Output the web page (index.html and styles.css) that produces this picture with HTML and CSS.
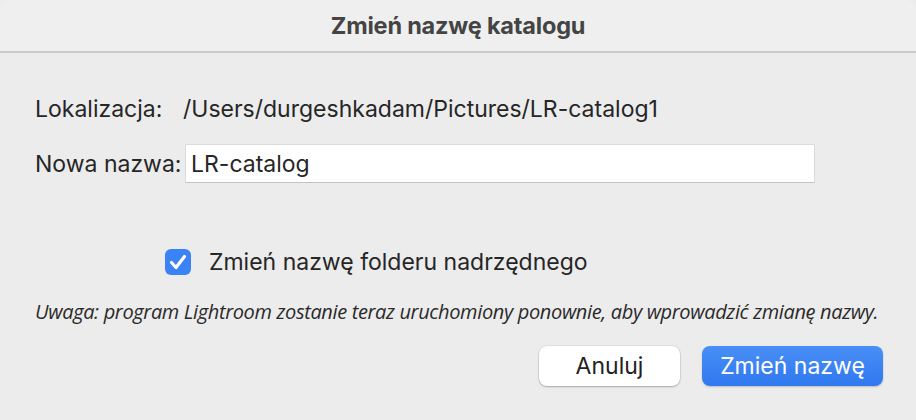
FILE: index.html
```html
<!DOCTYPE html>
<html lang="pl">
<head>
<meta charset="utf-8">
<link rel="stylesheet" href="styles.css">
</head>
<body>
<div class="dialog">
  <div class="titlebar">Zmień nazwę katalogu</div>
  <div class="content">
    <div class="row loc">
      <span class="label">Lokalizacja:</span>
      <span class="path">/Users/durgeshkadam/Pictures/LR-catalog1</span>
    </div>
    <div class="row name">
      <span class="label">Nowa nazwa:</span>
      <div class="input">LR-catalog</div>
    </div>
    <div class="row check">
      <span class="box"><svg viewBox="0 0 26 26" width="26" height="26"><path d="M6.5 13.5 L11 18.5 L19.5 7.5" fill="none" stroke="#fff" stroke-width="3.2" stroke-linecap="round" stroke-linejoin="round"/></svg></span>
      <span class="check-label">Zmień nazwę folderu nadrzędnego</span>
    </div>
    <div class="note">Uwaga: program Lightroom zostanie teraz uruchomiony ponownie, aby wprowadzić zmianę nazwy.</div>
    <div class="buttons">
      <button class="btn cancel">Anuluj</button>
      <button class="btn primary">Zmień nazwę</button>
    </div>
  </div>
</div>
</body>
</html>
```
FILE: styles.css
```css
html, body {
  margin: 0;
  padding: 0;
  background: #ececec;
}
body {
  width: 916px;
  height: 420px;
  overflow: hidden;
  font-family: Inter, "Noto Sans", sans-serif;
  color: #262626;
}
.dialog {
  width: 916px;
  height: 420px;
  display: flex;
  flex-direction: column;
}
.titlebar {
  background: #efefef;
  border-bottom: 2px solid #cbcbcb;
  display: flex;
  align-items: center;
  justify-content: center;
  font-size: 23.5px;
  font-weight: 700;
  letter-spacing: -0.2px;
  color: #444;
  border-top-left-radius: 10px;
  border-top-right-radius: 10px;
  box-sizing: border-box;
  height: 53px;
  padding-bottom: 1px;
}
.content {
  padding: 0 35px;
  display: flex;
  flex-direction: column;
  font-size: 23px;
  font-weight: 400;
}
.row {
  display: flex;
  align-items: center;
}
.loc {
  margin-top: 42px;
  height: 28px;
}
.loc .label {
  width: 148px;
}
.name {
  margin-top: 21px;
}
.name .label {
  width: 150px;
}
.input {
  width: 630px;
  height: 39px;
  box-sizing: border-box;
  background: #fff;
  border: 1px solid #dcdcdc;
  border-bottom-color: #c4c4c4;
  padding-left: 5px;
  display: flex;
  align-items: center;
}
.check {
  margin-top: 65px;
  margin-left: 130px;
}
.box {
  width: 26px;
  height: 26px;
  border-radius: 6px;
  background: #3a82f6;
  display: flex;
}
.check-label {
  margin-left: 18px;
}
.note {
  margin-top: 22px;
  font-family: "Open Sans", sans-serif;
  font-style: italic;
  font-size: 20px;
  letter-spacing: -0.35px;
  color: #2a2a2a;
}
.buttons {
  margin-top: 21px;
  display: flex;
  justify-content: flex-end;
  gap: 22px;
  margin-right: -2px;
}
.btn {
  height: 40px;
  border: none;
  border-radius: 8px;
  font-family: Inter, "Noto Sans", sans-serif;
  font-size: 23px;
  padding: 0;
}
.cancel {
  width: 141px;
  background: #fff;
  color: #222;
  box-shadow: 0 1px 2px rgba(0,0,0,0.25), 0 0 0 0.5px rgba(0,0,0,0.1);
}
.primary {
  width: 181px;
  background: linear-gradient(#4a8ff7, #2f78ef);
  color: #fff;
  box-shadow: 0 1px 2px rgba(0,0,0,0.2);
}
```
